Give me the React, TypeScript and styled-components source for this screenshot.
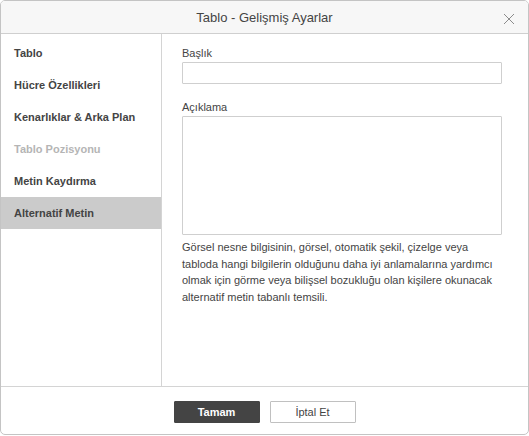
import React from "react";
import styled, { createGlobalStyle } from "styled-components";

const Global = createGlobalStyle`
  html, body { margin: 0; padding: 0; background: #fff; }
  body { font-family: "Liberation Sans", Arial, sans-serif; color: #444; }
  * { box-sizing: border-box; }
`;

const Dialog = styled.div`
  width: 529px;
  height: 435px;
  border: 1px solid #c4c4c4;
  border-radius: 5px;
  background: #fff;
  display: flex;
  flex-direction: column;
  overflow: hidden;
`;

const Header = styled.div`
  height: 33px;
  flex: none;
  background: #f7f7f7;
  border-bottom: 1px solid #cfcfcf;
  position: relative;
  display: flex;
  align-items: center;
  justify-content: center;
  font-size: 13px;
  color: #444;
`;

const Close = styled.button`
  position: absolute;
  right: 13px;
  top: 12px;
  width: 12px;
  height: 12px;
  padding: 0;
  border: none;
  background: none;
  display: flex;
  align-items: center;
  justify-content: center;
`;

const Body = styled.div`
  flex: 1;
  display: flex;
  min-height: 0;
`;

const Sidebar = styled.div`
  width: 161px;
  flex: none;
  border-right: 1px solid #d4d4d4;
  padding-top: 3px;
  display: flex;
  flex-direction: column;
`;

const Item = styled.div<{ $active?: boolean; $disabled?: boolean }>`
  height: 32px;
  display: flex;
  align-items: center;
  padding-left: 13px;
  font-size: 11px;
  font-weight: bold;
  color: ${(p) => (p.$disabled ? "#b5b5b5" : "#444")};
  background: ${(p) => (p.$active ? "#cbcbcb" : "transparent")};
`;

const Content = styled.div`
  flex: 1;
  padding: 12px 26px 0 20px;
  display: flex;
  flex-direction: column;
`;

const Label = styled.div<{ $top?: number }>`
  font-size: 11px;
  line-height: 14px;
  margin-top: ${(p) => p.$top ?? 0}px;
  margin-bottom: 2px;
  color: #444;
`;

const Input = styled.div`
  height: 22px;
  border: 1px solid #cfcfcf;
  border-radius: 1px;
  background: #fff;
`;

const TextArea = styled.div`
  height: 119px;
  border: 1px solid #cfcfcf;
  border-radius: 1px;
  background: #fff;
`;

const Description = styled.div`
  margin-top: 4px;
  font-size: 11px;
  line-height: 16.5px;
  color: #444;
`;

const Footer = styled.div`
  height: 48px;
  flex: none;
  border-top: 1px solid #d4d4d4;
  display: flex;
  justify-content: center;
  align-items: flex-start;
  padding-top: 14px;
  gap: 10px;
`;

const Button = styled.button<{ $primary?: boolean }>`
  width: 86px;
  height: 22px;
  padding: 0;
  border-radius: 1px;
  font-family: "Liberation Sans", Arial, sans-serif;
  font-size: 11px;
  font-weight: ${(p) => (p.$primary ? "bold" : "normal")};
  color: ${(p) => (p.$primary ? "#fff" : "#444")};
  background: ${(p) => (p.$primary ? "#444" : "#fff")};
  border: 1px solid ${(p) => (p.$primary ? "#444" : "#c0c0c0")};
`;

export default function App() {
  return (
    <>
      <Global />
      <Dialog>
        <Header>
          Tablo - Gelişmiş Ayarlar
          <Close aria-label="Kapat">
            <svg width="12" height="12" viewBox="0 0 12 12">
              <path d="M1 1 L11 11 M11 1 L1 11" stroke="#8c8c8c" strokeWidth="1" fill="none" />
            </svg>
          </Close>
        </Header>
        <Body>
          <Sidebar>
            <Item>Tablo</Item>
            <Item>Hücre Özellikleri</Item>
            <Item>Kenarlıklar &amp; Arka Plan</Item>
            <Item $disabled>Tablo Pozisyonu</Item>
            <Item>Metin Kaydırma</Item>
            <Item $active>Alternatif Metin</Item>
          </Sidebar>
          <Content>
            <Label>Başlık</Label>
            <Input />
            <Label $top={16}>Açıklama</Label>
            <TextArea />
            <Description>
              Görsel nesne bilgisinin, görsel, otomatik şekil, çizelge veya tabloda hangi bilgilerin
              olduğunu daha iyi anlamalarına yardımcı olmak için görme veya bilişsel bozukluğu olan
              kişilere okunacak alternatif metin tabanlı temsili.
            </Description>
          </Content>
        </Body>
        <Footer>
          <Button $primary>Tamam</Button>
          <Button>İptal Et</Button>
        </Footer>
      </Dialog>
    </>
  );
}
